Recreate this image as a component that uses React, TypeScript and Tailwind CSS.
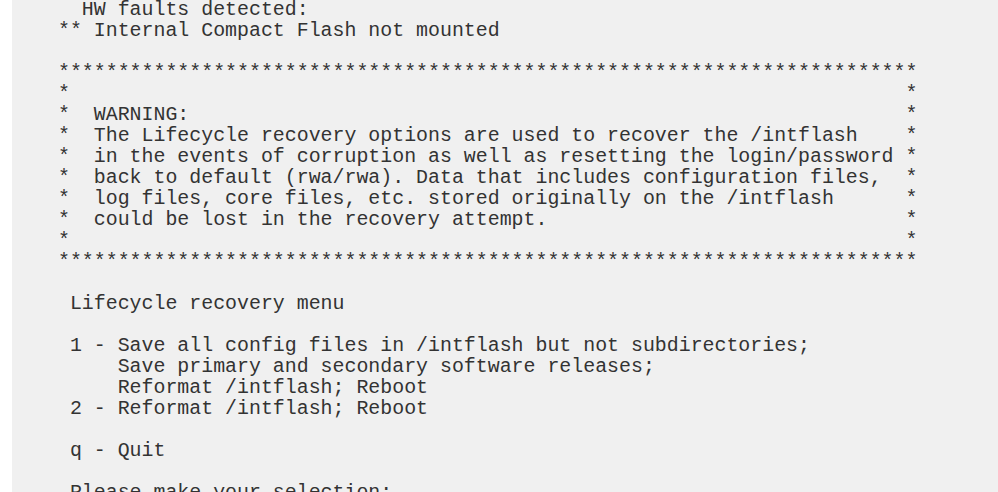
const W = 72;

function box(text: string) {
  return ("*  " + text).padEnd(W - 1, " ") + "*";
}

const stars = "*".repeat(W);

const lines: string[] = [
  "  HW faults detected:",
  "** Internal Compact Flash not mounted",
  "",
  stars,
  box(""),
  box("WARNING:"),
  box("The Lifecycle recovery options are used to recover the /intflash"),
  box("in the events of corruption as well as resetting the login/password"),
  box("back to default (rwa/rwa). Data that includes configuration files,"),
  box("log files, core files, etc. stored originally on the /intflash"),
  box("could be lost in the recovery attempt."),
  box(""),
  stars,
  "",
  " Lifecycle recovery menu",
  "",
  " 1 - Save all config files in /intflash but not subdirectories;",
  "     Save primary and secondary software releases;",
  "     Reformat /intflash; Reboot",
  " 2 - Reformat /intflash; Reboot",
  "",
  " q - Quit",
  "",
  " Please make your selection:",
];

export default function App() {
  return (
    <div className="flex h-[492px] w-full overflow-hidden bg-white">
      {/* ==== LEFT MARGIN ==== */}
      <div className="w-[12px] shrink-0" />
      {/* ==== CONSOLE ==== */}
      <div className="flex-1 bg-[#f0f0f0] pl-[46px]">
        <pre className="m-0 -mt-[1px] whitespace-pre font-['Liberation_Mono','Courier_New',monospace] text-[19.9px] leading-[21px] text-[#333]">
          {lines.join("\n")}
        </pre>
      </div>
    </div>
  );
}
